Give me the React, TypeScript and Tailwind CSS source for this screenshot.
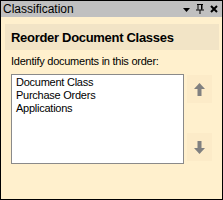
const font = { fontFamily: '"Liberation Sans", Arial, sans-serif' };

function ArrowUp() {
  return (
    <svg width="11" height="13" viewBox="0 0 11 13" aria-hidden>
      <polygon points="0,6 5.5,0 11,6" fill="#808080" />
      <rect x="3.5" y="5.5" width="4" height="7.5" fill="#808080" />
    </svg>
  );
}

function ArrowDown() {
  return (
    <svg width="11" height="13" viewBox="0 0 11 13" aria-hidden>
      <rect x="3.5" y="0" width="4" height="7.5" fill="#808080" />
      <polygon points="0,7 5.5,13 11,7" fill="#808080" />
    </svg>
  );
}

export default function App() {
  const items = ["Document Class", "Purchase Orders", "Applications"];
  return (
    <div
      className="flex h-[200px] w-[223px] flex-col border border-black bg-[#fff0cd] text-black"
      style={font}
    >
      {/* title bar */}
      <div className="flex h-[16px] shrink-0 items-center justify-between bg-[#c0c0c0] pl-[2px] pr-[4px]">
        <span className="text-[12px] leading-none">Classification</span>
        <div className="flex items-center gap-[6px]">
          <svg width="7" height="4" viewBox="0 0 7 4" className="mt-[2px]">
            <polygon points="0,0 7,0 3.5,4" fill="#000" />
          </svg>
          <svg width="8" height="10" viewBox="0 0 8 10">
            <path d="M1 0.5H7M2 0.5V5.5M5.5 0.5V5.5M0 6H8M4 6V10" stroke="#000" strokeWidth="1" fill="none" />
            <rect x="5" y="0.5" width="1.5" height="5" fill="#000" />
          </svg>
          <svg width="8" height="8" viewBox="0 0 8 8">
            <path d="M1 1L7 7M7 1L1 7" stroke="#000" strokeWidth="2" />
          </svg>
        </div>
      </div>

      <div className="flex flex-1 flex-col pl-[4px] pr-[3px] pt-[7px]">
        <div className="flex h-[26px] items-center bg-[#f2e4c6] px-[6px]">
          <span className="text-[13px] font-bold leading-none tracking-[-0.3px]">
            Reorder Document Classes
          </span>
        </div>

        <div className="flex flex-col pl-[6px] pt-[5px]">
          <span className="text-[11px] leading-[13px] tracking-[-0.25px]">
            Identify documents in this order:
          </span>
          <div className="mt-[6px] flex gap-[3px]">
            <ul className="h-[90px] w-[173px] border border-[#8a8a8a] bg-white pl-[4px] pt-[1px] text-[11px] leading-[13px] tracking-[-0.25px]">
              {items.map((it) => (
                <li key={it}>{it}</li>
              ))}
            </ul>
            <div className="flex w-[25px] flex-col justify-between pb-[3px] pt-[1px]">
              <button
                type="button"
                className="flex h-[28px] items-center justify-center bg-[#fcebc8]"
              >
                <ArrowUp />
              </button>
              <button
                type="button"
                className="flex h-[28px] items-center justify-center bg-[#fcebc8]"
              >
                <ArrowDown />
              </button>
            </div>
          </div>
        </div>
      </div>
    </div>
  );
}
